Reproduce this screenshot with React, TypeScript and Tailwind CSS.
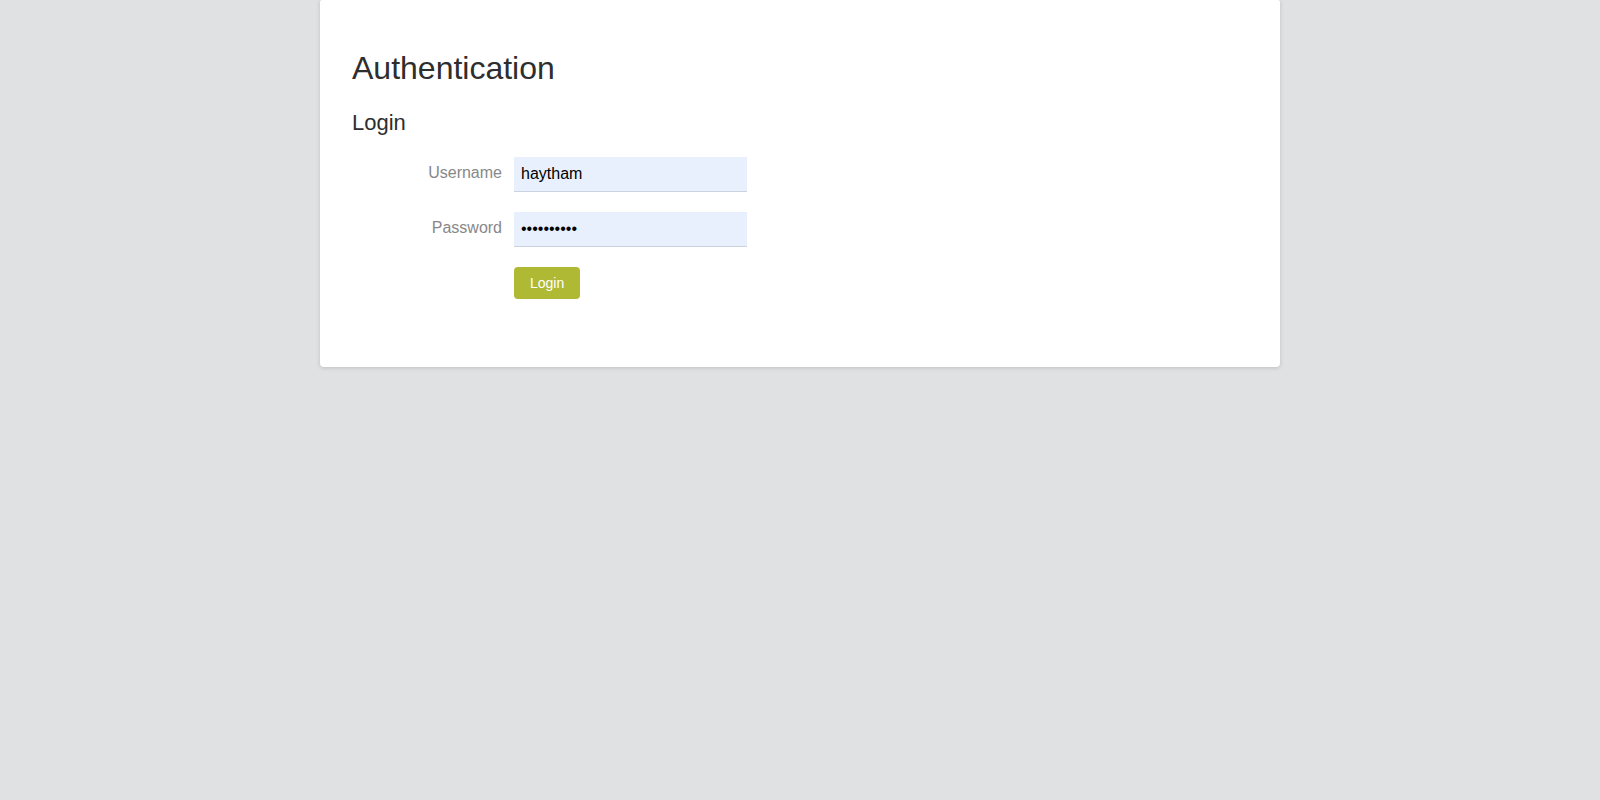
export default function App() {
  return (
    <div className="min-h-screen bg-[#e0e1e3] font-['Liberation_Sans',Arial,sans-serif] text-[#333]">
      <div className="mx-auto w-[960px] bg-white rounded-b-[4px] rounded-t-[2px] shadow-[0_1px_4px_rgba(0,0,0,0.15)] px-8 pt-[48px] pb-[68px]">
        <h1 className="text-[32px] leading-[40px] text-[#2e2e2e]">Authentication</h1>
        <h2 className="mt-[21px] text-[22px] leading-[28px] text-[#2e2e2e]">Login</h2>

        <form className="mt-[20px] flex flex-col gap-[20px]" onSubmit={(e) => e.preventDefault()}>
          <div className="flex items-center">
            <label className="w-[162px] pr-3 pb-[3px] text-right text-[16px] text-[#888]">Username</label>
            <input
              type="text"
              defaultValue="haytham"
              className="w-[233px] h-[35px] bg-[#e8f0fe] border-b border-[#ccd3dc] px-[7px] text-[16px] text-black outline-none"
            />
          </div>
          <div className="flex items-center">
            <label className="w-[162px] pr-3 pb-[3px] text-right text-[16px] text-[#888]">Password</label>
            <input
              type="password"
              defaultValue="secretpass"
              className="w-[233px] h-[35px] bg-[#e8f0fe] border-b border-[#ccd3dc] px-[7px] text-[16px] text-black outline-none"
            />
          </div>
          <div className="flex">
            <div className="w-[162px]" />
            <button
              type="submit"
              className="h-[32px] px-4 rounded-[4px] bg-[#afb934] text-white text-[14px]"
            >
              Login
            </button>
          </div>
        </form>
      </div>
    </div>
  );
}
